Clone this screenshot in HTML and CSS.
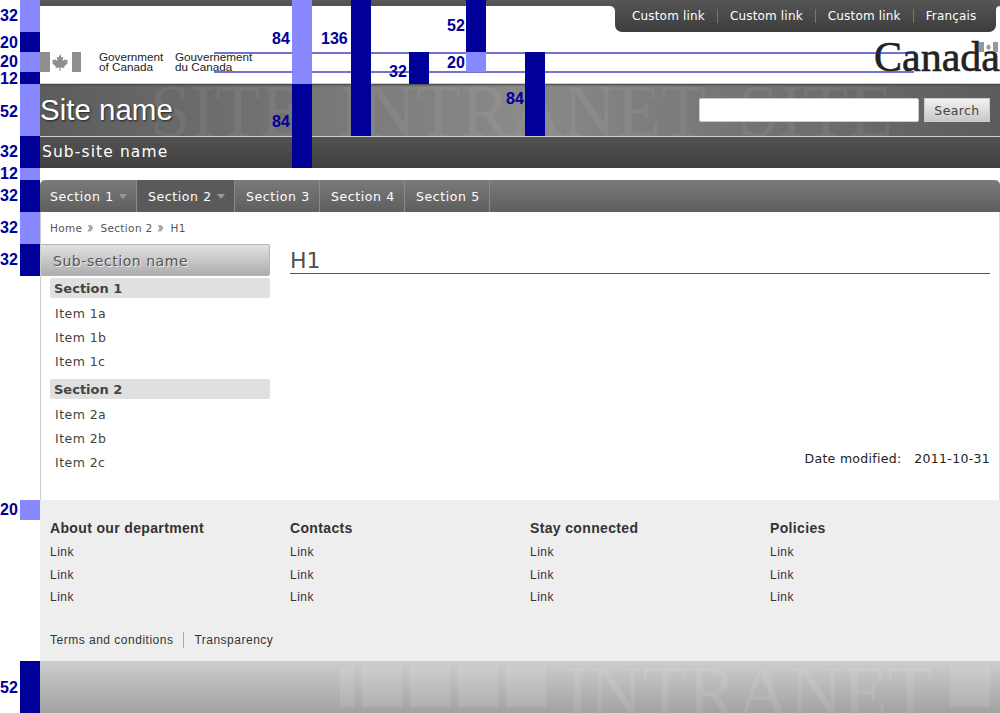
FILE: index.html
```html
<!DOCTYPE html>
<html lang="en">
<head>
<meta charset="utf-8">
<title>Site name</title>
<link rel="stylesheet" href="styles.css">
</head>
<body>
<div class="page">
  <header class="masthead">
    <div class="topband">
      <div class="topfill"></div>
      <nav class="toplinks">
        <a>Custom link</a><a>Custom link</a><a>Custom link</a><a>Français</a>
      </nav>
      <div class="topedge"></div>
    </div>
    <div class="fip">
      <svg class="flag" viewBox="0 0 41 20" aria-hidden="true">
        <rect width="10" height="20" fill="#8f8f8f"/>
        <rect x="32" width="9" height="20" fill="#8f8f8f"/>
        <path fill="#8f8f8f" d="M20.5 2l-2 3.600-1.800-.9.8 4.600-2.300-2.400-.5 1.300-2.700-.5.9 2.900-1 .5 4 3.300-.5 1.500 4-.5.100 3.600h1l.1-3.600 4 .5-.5-1.500 4-3.300-1-.5.9-2.900-2.700.5-.5-1.300-2.300 2.400.8-4.600-1.800.9z"/>
      </svg>
      <div class="sig sig-en">Government<br>of Canada</div>
      <div class="sig sig-fr">Gouvernement<br>du Canada</div>
      <div class="wordmark">Canada<svg class="wm-flag" viewBox="0 0 19 10" aria-hidden="true"><rect width="5" height="10" fill="#999"/><rect x="14" width="5" height="10" fill="#999"/><path fill="#999" d="M9.500 2l-1 1.500-1-.3.500 2-1.500.5 2.500 1.500v1h1v-1l2.500-1.500-1.500-.5.500-2-1 .3z"/></svg></div>
    </div>
    <div class="banner">
      <div class="watermark" aria-hidden="true">SITE INTRANET SITE</div>
      <div class="sitename">Site name</div>
      <form class="search">
        <span class="search-input"></span>
        <span class="search-btn">Search</span>
      </form>
    </div>
    <div class="subsite">Sub-site name</div>
  </header>

  <nav class="mainnav">
    <a class="tab">Section 1<i class="caret"></i></a>
    <a class="tab tab-active">Section 2<i class="caret"></i></a>
    <a class="tab">Section 3</a>
    <a class="tab">Section 4</a>
    <a class="tab">Section 5</a>
  </nav>

  <main class="content">
    <div class="crumbs">
      <a>Home</a><i class="chev"></i><a>Section 2</a><i class="chev"></i><a>H1</a>
    </div>
    <div class="columns">
      <aside class="side">
        <div class="side-title">Sub-section name</div>
        <h3 class="side-head">Section 1</h3>
        <ul class="side-list"><li>Item 1a</li><li>Item 1b</li><li>Item 1c</li></ul>
        <h3 class="side-head">Section 2</h3>
        <ul class="side-list"><li>Item 2a</li><li>Item 2b</li><li>Item 2c</li></ul>
      </aside>
      <section class="body">
        <h1 class="title">H1</h1>
        <p class="modified">Date modified:&nbsp;&nbsp; 2011-10-31</p>
      </section>
    </div>
  </main>

  <footer class="sitefoot">
    <div class="foot-cols">
      <div class="foot-col"><h4>About our department</h4><a>Link</a><a>Link</a><a>Link</a></div>
      <div class="foot-col"><h4>Contacts</h4><a>Link</a><a>Link</a><a>Link</a></div>
      <div class="foot-col"><h4>Stay connected</h4><a>Link</a><a>Link</a><a>Link</a></div>
      <div class="foot-col"><h4>Policies</h4><a>Link</a><a>Link</a><a>Link</a></div>
    </div>
    <div class="terms"><a>Terms and conditions</a><a>Transparency</a></div>
  </footer>

  <div class="baseband">
    <div class="tofu-row" aria-hidden="true">
      <i class="tofu tofu-0"></i><i class="tofu"></i><i class="tofu"></i><i class="tofu"></i><i class="tofu"></i>
      <span class="base-word">INTRANET</span>
      <i class="tofu tofu-last"></i>
    </div>
  </div>
</div>

<div class="rulers">
  <i class="hline hl-1"></i><i class="hline hl-2"></i>
  <i class="rb lt l0"></i><i class="rb dk l1"></i><i class="rb lt l2"></i><i class="rb dk l3"></i><i class="rb lt l4"></i><i class="rb dk l5"></i><i class="rb lt l6"></i><i class="rb dk l7"></i><i class="rb lt l8"></i><i class="rb dk l9"></i><i class="rb lt l10"></i><i class="rb dk l11"></i>
  <i class="rb lt a1"></i><i class="rb dk a2"></i><i class="rb dk b1"></i><i class="rb dk c1"></i><i class="rb dk d1"></i><i class="rb lt d2"></i><i class="rb dk e1"></i>
  <b class="rl n0">32</b><b class="rl n1">20</b><b class="rl n2">20</b><b class="rl n3">12</b><b class="rl n4">52</b><b class="rl n5">32</b><b class="rl n6">12</b><b class="rl n7">32</b><b class="rl n8">32</b><b class="rl n9">32</b><b class="rl n10">20</b><b class="rl n11">52</b>
  <b class="rl m1">84</b><b class="rl m2">84</b><b class="rl m3">136</b><b class="rl m4">52</b><b class="rl m5">32</b><b class="rl m6">20</b><b class="rl m7">84</b>
</div>
</body>
</html>
```

FILE: styles.css
```css
* { box-sizing: border-box; }
html, body { margin: 0; padding: 0; }
body { background: #fff; width: 1000px; height: 713px; overflow: hidden; position: relative; font-family: "DejaVu Sans", sans-serif; color: #444; }
.page { margin-left: 40px; width: 960px; }
a { color: inherit; text-decoration: none; }
h1, h3, h4, p, ul { margin: 0; padding: 0; }
ul { list-style: none; }
i { display: block; }

/* masthead */
.topband { display: flex; height: 32px; background: linear-gradient(#585858, #4a4a4a) top / 100% 12px no-repeat, #fff; }
.topfill { flex: 1; margin-top: 6px; background: #fff; border-top-right-radius: 5px; }
.topedge { width: 4px; margin-top: 6px; background: #fff; border-top-left-radius: 4px; }
.toplinks { display: flex; align-items: center; padding-left: 5px; padding-right: 6px; height: 32px; width: 381px; background: linear-gradient(#555, #3d3d3d); border-radius: 0 0 7px 7px; color: #fff; font-size: 12px; letter-spacing: .17px; }
.toplinks a { padding: 0 12px; line-height: 14px; border-left: 1px solid #777; white-space: nowrap; }
.toplinks a:first-child { border-left: 0; }

.fip { display: flex; height: 52px; padding-top: 20px; background: #fff; border-bottom: 1px solid #ccc; position: relative; }
.flag { width: 41px; height: 20px; margin-right: 18px; flex: none; }
.sig { font-family: "Liberation Sans", sans-serif; font-size: 11.7px; line-height: 10px; color: #222; margin-top: 0; white-space: nowrap; }
.sig-en { width: 76px; }
.wordmark { position: absolute; left: 834px; top: 0; width: 130px; height: 40px; font-family: "Liberation Serif", serif; font-size: 42px; line-height: 50px; color: #222; -webkit-text-stroke: .6px #222; }
.wm-flag { position: absolute; left: 105px; top: 10px; width: 19px; height: 10px; }

.banner { height: 52px; display: flex; justify-content: space-between; align-items: center; padding-right: 10px; position: relative; overflow: hidden; background: linear-gradient(90deg, #5c5c5c 0%, #8a8a8a 50%, #5c5c5c 100%); box-shadow: inset 0 2px 2px -1px #444; }
.watermark { position: absolute; left: 110px; top: -14px; font-family: "Liberation Serif", serif; font-size: 73.500px; line-height: 83px; word-spacing: 15px; color: rgba(255,255,255,.06); white-space: nowrap; }
.sitename { position: relative; font-family: "Liberation Sans", sans-serif; font-size: 29.500px; line-height: 52px; color: #fff; text-shadow: 1px 1px 2px #222; }
.search { position: relative; display: flex; gap: 5px; }
.search-input { width: 220px; height: 24px; background: #fff; border: 1px solid #ccc; border-radius: 2px; }
.search-btn { width: 66px; height: 24px; line-height: 24px; text-align: center; font-size: 12.500px; letter-spacing: .4px; color: #444; background: linear-gradient(#f2f2f2, #c8c8c8); border: 1px solid #ccc; }

.subsite { height: 32px; padding-left: 2px; line-height: 30px; border-top: 1px solid #ccc; background: linear-gradient(#525252, #404040); color: #fff; font-size: 15.500px; letter-spacing: 1.100px; }

/* main nav */
.mainnav { display: flex; height: 32px; margin-top: 12px; background: linear-gradient(#7b7b7b, #777 12%, #5e5e5e); border-radius: 5px 5px 0 0; color: #fff; font-size: 12.500px; letter-spacing: .6px; }
.tab { display: flex; align-items: center; padding: 0 0 0 11px; border-right: 1px solid #8a8a8a; white-space: nowrap; }
.tab:first-child { padding-left: 10px; }
.tab-active { background: #5a5a5a; }
.caret { width: 0; height: 0; margin-left: 5px; margin-top: 1px; border: 4px solid transparent; border-top: 5px solid #999; border-bottom: 0; }
.tab:nth-child(1) { width: 97px; }
.tab:nth-child(2) { width: 98px; }
.tab:nth-child(3), .tab:nth-child(4), .tab:nth-child(5) { width: 85px; }

/* content */
.content { height: 288px; border-left: 1px solid #ccc; border-right: 1px solid #ddd; }
.crumbs { display: flex; align-items: center; height: 32px; padding-left: 9px; font-size: 10.500px; letter-spacing: .35px; color: #555; }
.chev { width: 6px; height: 7px; margin: 0 7px 0 5px; background: #aaa; clip-path: polygon(0 0, 55% 0, 100% 50%, 55% 100%, 0 100%, 30% 50%); }
.columns { display: flex; }
.side { width: 229px; flex: none; }
.side-title { height: 32px; margin-bottom: 2px; padding-left: 12px; line-height: 32px; font-size: 14px; letter-spacing: .55px; color: #555; text-shadow: 1px 1px 0 #eee; background: linear-gradient(#e2e2e2, #adadad); border: 1px solid #b5b5b5; border-left: 0; border-radius: 0 2px 2px 0; }
.side-head { margin-left: 9px; height: 20px; padding-left: 4px; line-height: 21px; font-size: 13px; color: #444; background: #e0e0e0; border-radius: 2px; }
.side-list { margin-left: 14px; margin-top: 4px; margin-bottom: 5px; font-size: 12.500px; letter-spacing: .45px; line-height: 24px; color: #444; }
.body { width: 700px; margin-left: 20px; }
.title { height: 30px; border-bottom: 1px solid #555; font-size: 22px; font-weight: 400; line-height: 33px; color: #505050; }
.modified { margin-top: 175px; text-align: right; font-size: 12.500px; letter-spacing: .3px; line-height: 20px; color: #222; }

/* footer */
.sitefoot { height: 161px; background: #eee; padding: 20px 0 0 10px; font-family: "Liberation Sans", sans-serif; color: #333; }
.foot-cols { display: grid; grid-template-columns: repeat(4, 240px); }
.foot-col h4 { font-size: 14px; line-height: 16px; margin-bottom: 5px; letter-spacing: .35px; color: #333; }
.foot-col a { display: block; height: 22.500px; line-height: 22.500px; font-size: 12px; letter-spacing: .5px; }
.terms { display: flex; margin-top: 23px; font-size: 12px; letter-spacing: .5px; line-height: 16px; }
.terms a:first-child { padding-right: 10px; border-right: 1px solid #aaa; }
.terms a:last-child { padding-left: 10px; }

.baseband { height: 52px; overflow: hidden; background: linear-gradient(#cdcdcd, #a2a2a2); }
.tofu-row { display: flex; height: 52px; align-items: flex-start; padding-top: 6px; }
.tofu { width: 40px; height: 40px; flex: none; margin-right: 8px; background: rgba(255,255,255,.1); }
.tofu-0 { width: 14px; margin-left: 300px; }
.base-word { flex: none; width: 385px; margin-left: 11px; margin-top: -16px; font-family: "Liberation Serif", serif; font-size: 73.500px; line-height: 83px; color: rgba(255,255,255,.09); }
.tofu-last { margin-left: 0; }

/* rulers drawn over the page */
.rulers { position: absolute; inset: 0; pointer-events: none; }
.rb { position: absolute; width: 20px; }
.lt { background: #8888ff; }
.dk { background: #000099; }
.l0 { left: 20px; top: 0; height: 32px; }
.l1 { left: 20px; top: 32px; height: 20px; }
.l2 { left: 20px; top: 52px; height: 20px; }
.l3 { left: 20px; top: 72px; height: 12px; }
.l4 { left: 20px; top: 84px; height: 52px; }
.l5 { left: 20px; top: 136px; height: 32px; }
.l6 { left: 20px; top: 168px; height: 12px; }
.l7 { left: 20px; top: 180px; height: 32px; }
.l8 { left: 20px; top: 212px; height: 32px; }
.l9 { left: 20px; top: 244px; height: 32px; }
.l10 { left: 20px; top: 500px; height: 20px; }
.l11 { left: 20px; top: 661px; height: 52px; }
.a1 { left: 292px; top: 0; height: 84px; }
.a2 { left: 292px; top: 84px; height: 84px; }
.b1 { left: 351px; top: 0; height: 136px; }
.c1 { left: 409px; top: 52px; height: 32px; }
.d1 { left: 466px; top: 0; height: 52px; }
.d2 { left: 466px; top: 52px; height: 20px; }
.e1 { left: 525px; top: 52px; height: 84px; }
.hline { position: absolute; left: 214px; width: 700px; height: 2px; background: rgba(40,40,180,.65); }
.hl-1 { top: 52px; }
.hl-2 { top: 71px; }
.rl { position: absolute; font-family: "Liberation Sans", sans-serif; font-size: 16px; line-height: 20px; font-weight: 700; color: #000099; white-space: nowrap; }
.n0 { left: 0; top: 6px; }
.n1 { left: 0; top: 33px; }
.n2 { left: 0; top: 52px; }
.n3 { left: 0; top: 69px; }
.n4 { left: 0; top: 102px; }
.n5 { left: 0; top: 142px; }
.n6 { left: 0; top: 164px; }
.n7 { left: 0; top: 186px; }
.n8 { left: 0; top: 218px; }
.n9 { left: 0; top: 250px; }
.n10 { left: 0; top: 500px; }
.n11 { left: 0; top: 678px; }
.m1 { left: 272px; top: 29px; }
.m2 { left: 272px; top: 112px; }
.m3 { left: 321px; top: 29px; }
.m4 { left: 447px; top: 16px; }
.m5 { left: 389px; top: 62px; }
.m6 { left: 447px; top: 53px; }
.m7 { left: 506px; top: 89px; }
```
